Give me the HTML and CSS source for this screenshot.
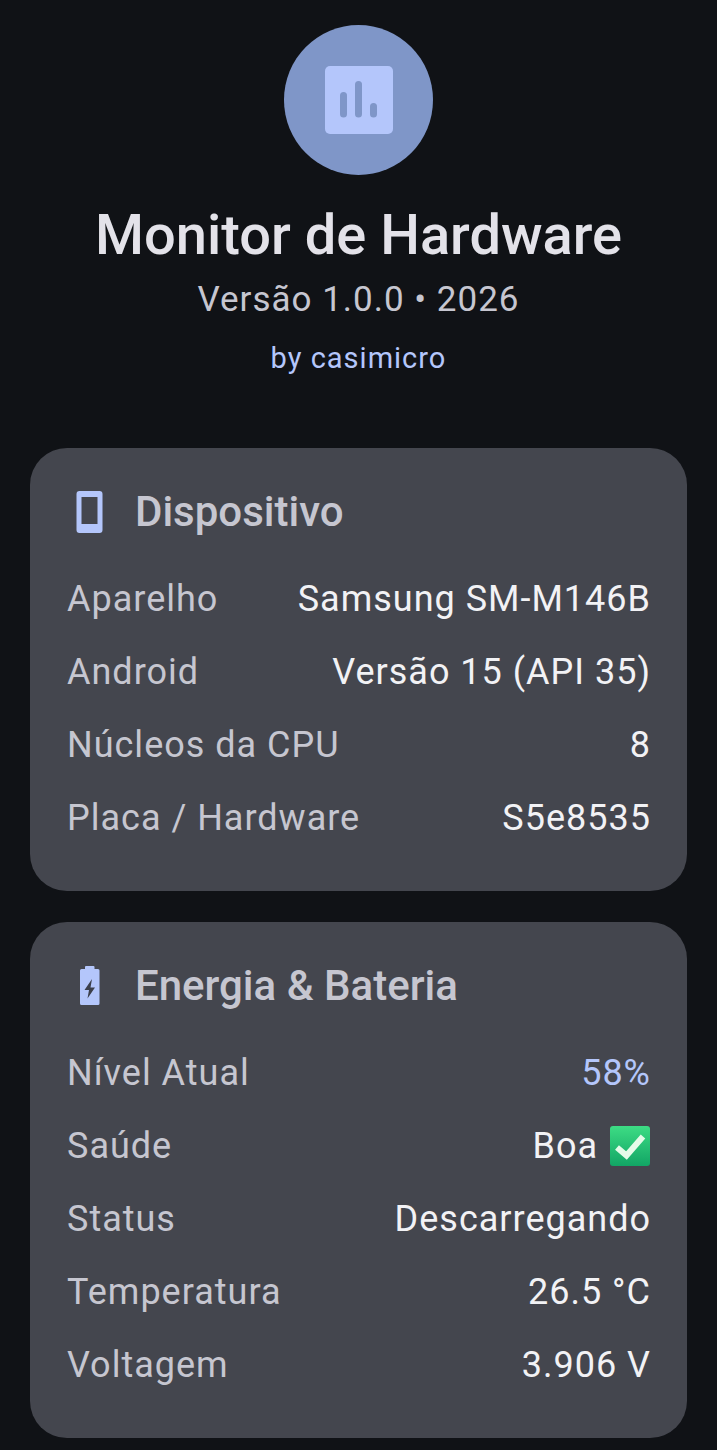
FILE: index.html
```html
<!DOCTYPE html>
<html lang="pt">
<head>
<meta charset="utf-8">
<title>Monitor de Hardware</title>
<link rel="stylesheet" href="styles.css">
</head>
<body>
<main class="screen">
  <header class="hero">
    <div class="logo">
      <svg class="logo-icon" viewBox="0 0 68 68" aria-hidden="true">
        <rect width="68" height="68" rx="5" fill="#b4c6fb"/>
        <rect x="15" y="26" width="7" height="25.500" rx="3.500" fill="#7f96c8"/>
        <rect x="30" y="15" width="7" height="36.500" rx="3.500" fill="#7f96c8"/>
        <rect x="45" y="37" width="7" height="14.500" rx="3.500" fill="#7f96c8"/>
      </svg>
    </div>
    <h1 class="title">Monitor de Hardware</h1>
    <p class="version">Versão 1.0.0 • 2026</p>
    <p class="author">by casimicro</p>
  </header>

  <section class="card">
    <div class="card-head">
      <svg class="card-icon" viewBox="0 0 28 42" aria-hidden="true">
        <path fill="#b4c6fb" fill-rule="evenodd" d="M3.500 0h20a3 3 0 0 1 3 3v36a3 3 0 0 1-3 3h-20a3 3 0 0 1-3-3V3a3 3 0 0 1 3-3zM5.500 6v27h16V6z"/>
      </svg>
      <h2 class="card-title">Dispositivo</h2>
    </div>
    <div class="row"><span class="label">Aparelho</span><span class="value">Samsung SM-M146B</span></div>
    <div class="row"><span class="label">Android</span><span class="value">Versão 15 (API 35)</span></div>
    <div class="row"><span class="label">Núcleos da CPU</span><span class="value">8</span></div>
    <div class="row"><span class="label">Placa / Hardware</span><span class="value">S5e8535</span></div>
  </section>

  <section class="card card-tall">
    <div class="card-head">
      <svg class="card-icon" viewBox="0 0 28 42" aria-hidden="true">
        <path fill="#b4c6fb" d="M10 1h7.500a1 1 0 0 1 1 1v2h3.500a1.500 1.500 0 0 1 1.500 1.500v33a1.500 1.500 0 0 1-1.500 1.500H5.500A1.500 1.500 0 0 1 4 38.500v-33A1.500 1.500 0 0 1 5.500 4H9V2a1 1 0 0 1 1-1z"/>
        <path fill="#3c3f4b" d="M16 14l-7.500 11h4.500l-1.500 8.500L19 22.500h-4.500z"/>
      </svg>
      <h2 class="card-title">Energia &amp; Bateria</h2>
    </div>
    <div class="row"><span class="label">Nível Atual</span><span class="value accent">58%</span></div>
    <div class="row"><span class="label">Saúde</span><span class="value value-icon">Boa
      <svg class="check" viewBox="0 0 40 40" aria-hidden="true">
        <defs>
          <linearGradient id="checkFill" x1="0" y1="0" x2="0" y2="1">
            <stop offset="0" stop-color="#3ddc84"/>
            <stop offset="1" stop-color="#12a565"/>
          </linearGradient>
        </defs>
        <rect width="40" height="40" rx="3" fill="url(#checkFill)"/>
        <path d="M7 21.500l9.500 8L33 10.500" fill="none" stroke="#e6fbe9" stroke-width="6"/>
      </svg></span></div>
    <div class="row"><span class="label">Status</span><span class="value">Descarregando</span></div>
    <div class="row"><span class="label">Temperatura</span><span class="value">26.5 °C</span></div>
    <div class="row"><span class="label">Voltagem</span><span class="value">3.906 V</span></div>
  </section>
</main>
</body>
</html>
```

FILE: styles.css
```css
* { box-sizing: border-box; }
html, body { margin: 0; padding: 0; }
body {
  background: #101216;
  font-family: Roboto, "Liberation Sans", sans-serif;
  overflow: hidden;
  height: 1450px;
}
.screen { padding: 25px 30px 0; }
.hero {
  display: flex;
  flex-direction: column;
  align-items: center;
  height: 423px;
}
.logo {
  width: 149px;
  height: 150px;
  border-radius: 50%;
  background: #7f96c8;
  display: flex;
  align-items: center;
  justify-content: center;
  flex: none;
}
.logo-icon { width: 68px; height: 68px; display: block; }
.title {
  margin: 28px 0 0;
  font-size: 56px;
  line-height: 64px;
  font-weight: 500;
  color: #e3e2e9;
}
.version {
  margin: 13px 0 0;
  font-size: 35px;
  line-height: 40px;
  letter-spacing: 1px;
  color: #c6c6d0;
}
.author {
  margin: 18px 0 0;
  font-size: 29px;
  line-height: 40px;
  letter-spacing: 1px;
  color: #b4c6fb;
}
.card {
  background: #44464e;
  border-radius: 37px;
  padding: 39px 36px 0 37px;
  margin-bottom: 31px;
  height: 443px;
}
.card-tall { height: 516px; margin-bottom: 0; }
.card-head {
  display: flex;
  align-items: center;
  height: 50px;
  margin-bottom: 25px;
}
.card-icon { width: 28px; height: 42px; margin-left: 9px; flex: none; }
.card-title {
  margin: 0 0 0 31px;
  font-size: 42px;
  line-height: 50px;
  font-weight: 500;
  color: #c6c6d0;
}
.row {
  display: flex;
  justify-content: space-between;
  align-items: center;
  height: 73px;
}
.label {
  font-size: 36px;
  letter-spacing: 1px;
  color: #c6c6d0;
}
.value {
  font-size: 36px;
  letter-spacing: 1px;
  color: #f2f2f5;
}
.accent { color: #b4c6fb; }
.value-icon { display: flex; align-items: center; gap: 12px; }
.check { width: 40px; height: 40px; display: block; margin-right: 1px; }
```
